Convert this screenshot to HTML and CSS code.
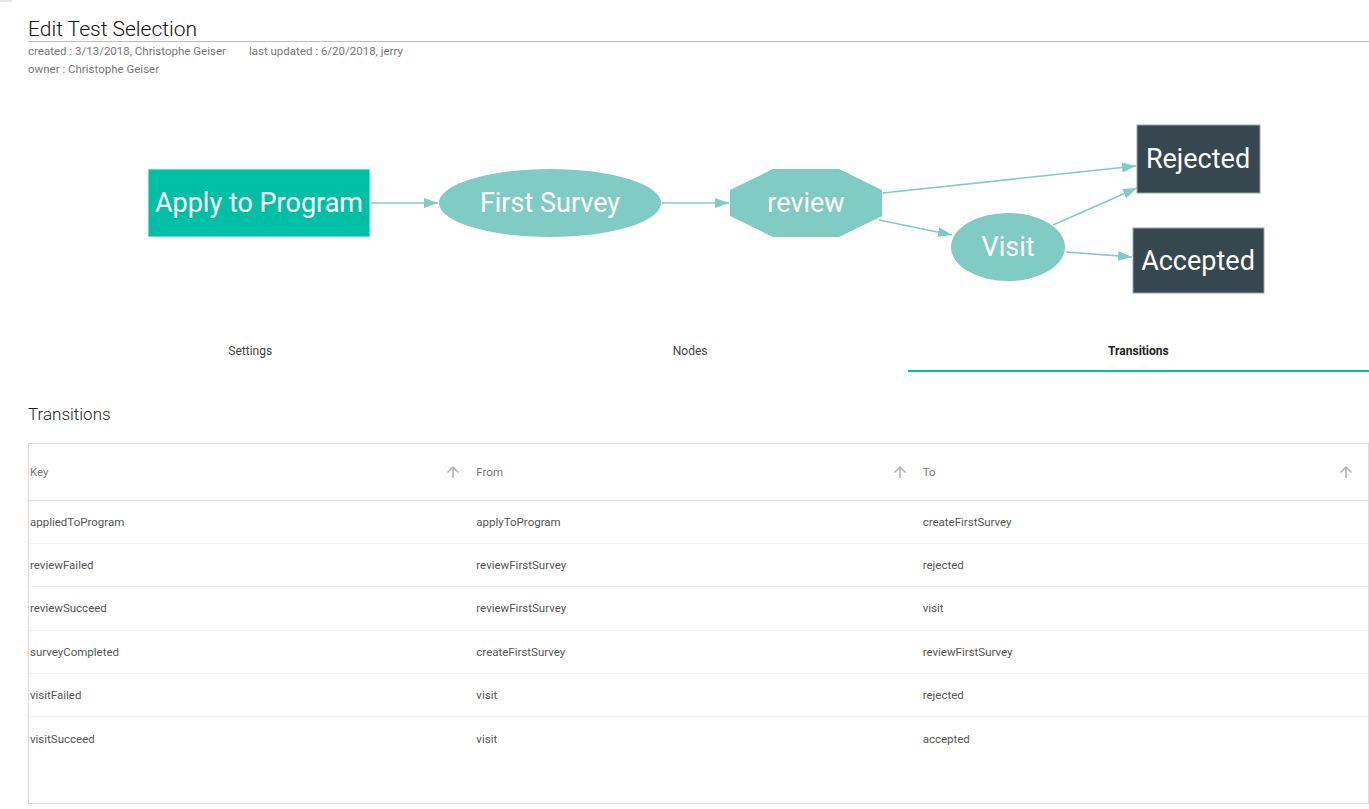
FILE: index.html
```html
<!DOCTYPE html>
<html>
<head>
<meta charset="utf-8">
<link rel="stylesheet" href="styles.css">
</head>
<body>
<div class="corner"></div>
<div class="page">
  <h1 class="title">Edit Test Selection</h1>
  <div class="meta">
    <div><span class="meta-item">created : 3/13/2018, Christophe Geiser</span><span>last updated : 6/20/2018, jerry</span></div>
    <div>owner : Christophe Geiser</div>
  </div>

  <svg class="graph" width="1341" height="252" viewBox="28 78 1341 252" xmlns="http://www.w3.org/2000/svg">
    <defs>
      <marker id="ah" viewBox="0 0 14 10" refX="14" refY="5" markerWidth="14" markerHeight="10" markerUnits="userSpaceOnUse" orient="auto">
        <path d="M0 0 L14 5 L0 10 Z" fill="#80cbc4"/>
      </marker>
    </defs>
    <g stroke="#80cbc4" stroke-width="1.6" fill="none" marker-end="url(#ah)">
      <line x1="371" y1="203" x2="438" y2="203"/>
      <line x1="662" y1="203" x2="729" y2="203"/>
      <line x1="883" y1="193" x2="1136" y2="166"/>
      <line x1="879" y1="220" x2="952" y2="235"/>
      <line x1="1053" y1="225" x2="1137" y2="188"/>
      <line x1="1066" y1="252" x2="1132" y2="257"/>
    </g>
    <rect x="148" y="169" width="222" height="68" fill="#00bfa5" stroke="#e0f2f1" stroke-width="1"/>
    <ellipse cx="550" cy="203" rx="111" ry="34" fill="#80cbc4"/>
    <polygon points="773,169 839,169 882,190 882,216 839,237 773,237 730,216 730,190" fill="#80cbc4"/>
    <ellipse cx="1008" cy="247" rx="57" ry="34" fill="#80cbc4"/>
    <rect x="1137" y="125" width="123" height="68" fill="#37474f" stroke="#9aa3a7" stroke-width="1"/>
    <rect x="1133" y="228" width="131" height="65" fill="#37474f" stroke="#9aa3a7" stroke-width="1"/>
    <g class="node-label" fill="#ffffff" text-anchor="middle">
      <text x="259" y="212">Apply to Program</text>
      <text x="550" y="212">First Survey</text>
      <text x="806" y="212">review</text>
      <text x="1008" y="256">Visit</text>
      <text x="1198" y="168">Rejected</text>
      <text x="1198" y="270">Accepted</text>
    </g>
  </svg>

  <div class="tabs">
    <div class="tab">Settings</div>
    <div class="tab">Nodes</div>
    <div class="tab active">Transitions</div>
  </div>

  <h2 class="section-title">Transitions</h2>

  <div class="table">
    <div class="row head">
      <div class="cell">Key<svg class="sort" width="18" height="18" viewBox="0 0 24 24"><path d="M4 12l1.41 1.41L11 7.83V20h2V7.83l5.58 5.59L20 12l-8-8-8 8z" fill="#b0b0b0"/></svg></div>
      <div class="cell">From<svg class="sort" width="18" height="18" viewBox="0 0 24 24"><path d="M4 12l1.41 1.41L11 7.83V20h2V7.83l5.58 5.59L20 12l-8-8-8 8z" fill="#b0b0b0"/></svg></div>
      <div class="cell">To<svg class="sort" width="18" height="18" viewBox="0 0 24 24"><path d="M4 12l1.41 1.41L11 7.83V20h2V7.83l5.58 5.59L20 12l-8-8-8 8z" fill="#b0b0b0"/></svg></div>
    </div>
    <div class="row"><div class="cell">appliedToProgram</div><div class="cell">applyToProgram</div><div class="cell">createFirstSurvey</div></div>
    <div class="row"><div class="cell">reviewFailed</div><div class="cell">reviewFirstSurvey</div><div class="cell">rejected</div></div>
    <div class="row"><div class="cell">reviewSucceed</div><div class="cell">reviewFirstSurvey</div><div class="cell">visit</div></div>
    <div class="row"><div class="cell">surveyCompleted</div><div class="cell">createFirstSurvey</div><div class="cell">reviewFirstSurvey</div></div>
    <div class="row"><div class="cell">visitFailed</div><div class="cell">visit</div><div class="cell">rejected</div></div>
    <div class="row last"><div class="cell">visitSucceed</div><div class="cell">visit</div><div class="cell">accepted</div></div>
  </div>
</div>
</body>
</html>
```

FILE: styles.css
```css
html, body {
  margin: 0;
  padding: 0;
  background: #ffffff;
}
body {
  font-family: Roboto, "Liberation Sans", sans-serif;
  color: #333;
}
.corner {
  position: absolute;
  left: 0;
  top: 0;
  width: 12px;
  height: 2px;
  background: #e6e6e6;
}
.page {
  padding-left: 28px;
}
.title {
  margin: 0;
  padding-top: 18px;
  font-size: 21px;
  line-height: 23px;
  font-weight: 300;
  color: #111;
  border-bottom: 1px solid #bdbdbd;
}
.meta {
  font-size: 11.5px;
  line-height: 18px;
  color: #777;
}
.meta-item {
  margin-right: 23px;
}
.graph {
  display: block;
}
.node-label {
  font-family: Roboto, "Liberation Sans", sans-serif;
  font-size: 27px;
}
.tabs {
  display: flex;
  height: 42px;
}
.tab {
  flex: 1 1 auto;
  text-align: center;
  font-size: 12px;
  font-weight: 400;
  color: #444;
  padding-top: 2px;
  line-height: 38px;
  border-bottom: 2px solid transparent;
}
.tab.active {
  color: #222;
  font-weight: 700;
  border-bottom-color: #00bfa5;
}
.section-title {
  margin: 31px 0 0 0;
  font-size: 17px;
  line-height: 22px;
  font-weight: 300;
  color: #222;
}
.table {
  margin-top: 18px;
  border: 1px solid #dddddd;
  height: 359px;
}
.row {
  display: grid;
  grid-template-columns: 1fr 1fr 1fr;
  height: 43.2px;
  border-bottom: 1px solid #f0f0f0;
  box-sizing: border-box;
}
.row.last {
  border-bottom: none;
}
.row.head {
  height: 57px;
  border-bottom: 1px solid #dddddd;
}
.cell {
  display: flex;
  align-items: center;
  padding-left: 1px;
  padding-right: 13px;
  font-size: 11.5px;
  color: #555;
}
.head .cell {
  color: #777;
  justify-content: space-between;
}
.sort {
  display: block;
}
```
